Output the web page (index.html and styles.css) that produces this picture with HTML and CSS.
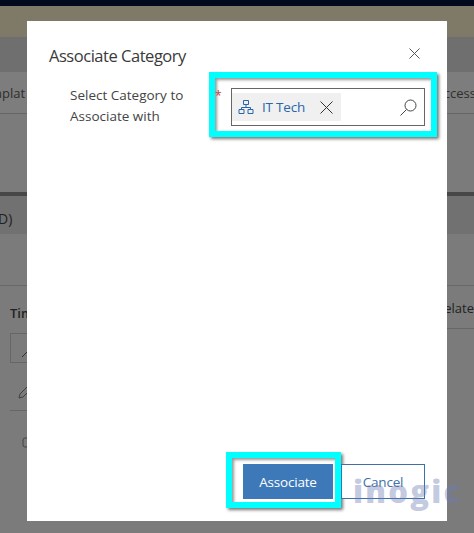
FILE: index.html
```html
<!DOCTYPE html>
<html lang="en">
<head>
<meta charset="utf-8">
<title>Associate Category</title>
<link rel="stylesheet" href="styles.css">
</head>
<body>
<div class="page">
  <div class="band band-top"></div>
  <div class="band band-notice"></div>
  <div class="band band-head"></div>
  <div class="band band-tabs">
    <span>nplat</span>
    <span>ccess</span>
  </div>
  <div class="band band-body"></div>
  <div class="band band-rule"></div>
  <div class="band band-section"><span>D)</span></div>
  <div class="band band-gap"></div>
  <div class="band band-content">
    <div class="side-left">
      <div class="side-title">Timeline</div>
      <div class="side-search"><svg class="side-glass" viewBox="0 0 14 14" width="14" height="14"><path d="M1 13l7-7" stroke="#333" fill="none"/><circle cx="11" cy="3" r="4" fill="none" stroke="#333"/></svg></div>
      <svg class="side-pencil" viewBox="0 0 16 16" width="16" height="16"><path d="M1 15l1-4L12 1l3 3L5 14z" fill="none" stroke="#3f3f3f"/></svg>
      <div class="side-line"></div>
      <svg class="side-bot" viewBox="0 0 16 16" width="16" height="16"><rect x="2" y="3" width="12" height="9" rx="2" fill="none" stroke="#444"/></svg>
    </div>
    <div class="side-right">Relate</div>
  </div>
</div>

<section class="modal">
  <header class="modal-head">
    <h1 class="modal-title">Associate Category</h1>
    <svg class="close" viewBox="0 0 11 11" width="11" height="11"><path d="M.5.5l10 10M10.500.5l-10 10" stroke="#555" fill="none"/></svg>
  </header>
  <div class="field">
    <label class="field-label">Select Category to Associate with</label>
    <div class="hl hl-field">
      <span class="req">*</span>
      <div class="lookup">
        <div class="chip">
          <svg class="tree" viewBox="0 0 16 16" width="16" height="16"><path d="M5.500 1.500h5v4h-5zM1 10.500h5v4H1zM10 10.500h5v4h-5zM8 5.500v3M3.500 10.500v-2h9v2" fill="none" stroke="#2b64ab"/></svg>
          <span class="chip-text">IT Tech</span>
          <svg class="chip-x" viewBox="0 0 13 13" width="13" height="13"><path d="M.5.5l12 12M12.500.5l-12 12" stroke="#333" fill="none"/></svg>
        </div>
        <svg class="search" viewBox="0 0 17 17" width="17" height="17"><circle cx="10.500" cy="6.500" r="5.500" fill="none" stroke="#444"/><path d="M6.500 10.500L.5 16.500" stroke="#444" fill="none"/></svg>
      </div>
    </div>
  </div>
  <footer class="modal-foot">
    <div class="hl hl-btn"><button class="btn-primary">Associate</button></div>
    <button class="btn-cancel">Cancel</button>
  </footer>
</section>
<div class="watermark">inogic</div>
</body>
</html>
```

FILE: styles.css
```css
* { box-sizing: border-box; }
html, body { margin: 0; height: 100%; overflow: hidden; }
body { font-family: "Open Sans", "Noto Sans", sans-serif; background: #7b7b7b; color: #333; }
.page { display: flex; flex-direction: column; height: 533px; }
.band { flex: none; }
.band-top { height: 6px; background: #000a1c; }
.band-notice { height: 31px; background: #7f7a68; }
.band-head { height: 35px; background: #6f6f6f; }
.band-tabs { height: 42px; background: #7d7d7d; border-bottom: 1px solid #666; display: flex; justify-content: space-between; align-items: center; font-size: 13px; color: #2e2e2e; margin-left: -6px; margin-right: -2px; }
.band-body { height: 78px; background: #7b7b7b; }
.band-rule { height: 4px; background: #474747; }
.band-section { height: 38px; background: #717171; font-size: 14px; color: #222; display: flex; align-items: center; margin-left: -2px; padding-top: 6px; }
.band-gap { height: 52px; background: #7b7b7b; border-bottom: 1px solid #686868; }
.band-content { flex: 1; display: flex; justify-content: space-between; }
.side-left { width: 27px; overflow: hidden; padding: 18px 0 0 10px; flex: none; display: flex; flex-direction: column; align-items: flex-start; }
.side-title { font-size: 13px; font-weight: 600; color: #222; line-height: 18px; white-space: nowrap; }
.side-search { width: 30px; height: 30px; flex: none; border: 1px solid #666; margin-top: 11px; padding: 10px 0 0 10px; }
.side-glass { display: block; }
.side-pencil { margin: 20px 0 0 8px; flex: none; }
.side-line { width: 30px; height: 1px; flex: none; background: #666; margin-top: 11px; }
.side-bot { margin: 24px 0 0 11px; flex: none; }
.side-right { width: 27px; overflow: hidden; white-space: nowrap; font-size: 13px; color: #222; padding-top: 13px; height: 43px; border-bottom: 1px solid #666; direction: rtl; }

.modal { position: absolute; left: 27px; top: 21px; width: 420px; height: 500px; background: #fff; display: flex; flex-direction: column; }
.modal-head { display: flex; justify-content: space-between; align-items: center; padding: 18px 27px 0 22px; height: 51px; flex: none; }
.modal-title { margin: 0; font-size: 16.500px; font-weight: 400; color: #3a3a3a; line-height: 24px; white-space: nowrap; letter-spacing: -.47px; }
.close { margin-top: -4px; }
.field { display: flex; flex: 1; padding-left: 43px; align-items: flex-start; }
.field-label { width: 139px; flex: none; font-size: 13.500px; line-height: 21px; color: #444; margin-top: 13px; letter-spacing: 0; padding-right: 11px; }
.req { color: #c0433a; font-size: 12px; line-height: 14px; width: 16px; flex: none; margin-top: 1px; }
.hl { border: 6px solid #0ff; box-shadow: 2px 2px 3px #777, inset 2px 2px 3px #999; background: #fff; }
.hl-field { width: 228px; height: 65px; padding: 10px 6px 0 0; flex: none; display: flex; align-items: flex-start; }
.lookup { flex: 1; height: 38px; border: 1px solid #666; display: flex; align-items: center; justify-content: space-between; padding: 0 7px 0 0; }
.chip { width: 109px; height: 28px; background: #f0f0f0; display: flex; align-items: center; padding-left: 6px; }
.tree { flex: none; }
.chip-text { font-size: 13.500px; color: #2b64ab; margin-left: 8px; width: 58px; letter-spacing: -.2px; }
.chip-x { flex: none; }
.modal-foot { flex: none; height: 69px; display: flex; align-items: flex-start; padding-left: 199px; }
.hl-btn { width: 115px; height: 56px; padding: 6px 2px 0 11px; flex: none; }
.btn-primary { width: 90px; height: 35px; border: 0; background: #3d78b9; color: #fff; font: 13.500px "Open Sans", "Noto Sans", sans-serif; letter-spacing: -.2px; padding: 0; }
.btn-cancel { width: 84px; height: 35px; margin-top: 12px; border: 1px solid #3f6fa8; background: #fff; color: #3f6fa8; font: 13.500px "Open Sans", "Noto Sans", sans-serif; padding: 0; letter-spacing: -.2px; }
.watermark { position: absolute; left: 353px; top: 471px; font: 800 31px "Open Sans", sans-serif; letter-spacing: 2.200px; color: rgba(110, 125, 180, .42); line-height: 40px; }
```
